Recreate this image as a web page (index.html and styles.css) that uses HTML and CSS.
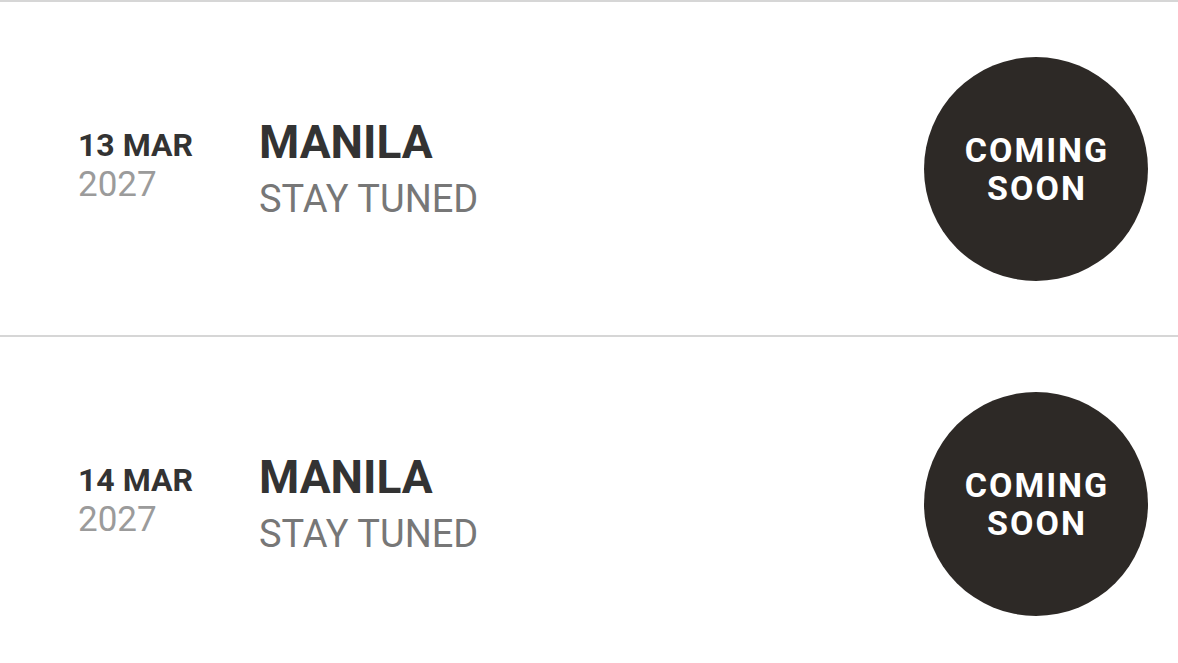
FILE: index.html
```html
<!DOCTYPE html>
<html lang="en">
<head>
<meta charset="utf-8">
<title>Tour dates</title>
<link rel="stylesheet" href="styles.css">
</head>
<body>
<ul class="dates">
  <li class="event">
    <div class="date">
      <span class="day">13 MAR</span>
      <span class="year">2027</span>
    </div>
    <div class="info">
      <span class="city">MANILA</span>
      <span class="venue">STAY TUNED</span>
    </div>
    <div class="badge"><span>COMING<br>SOON</span></div>
  </li>
  <li class="event">
    <div class="date">
      <span class="day">14 MAR</span>
      <span class="year">2027</span>
    </div>
    <div class="info">
      <span class="city">MANILA</span>
      <span class="venue">STAY TUNED</span>
    </div>
    <div class="badge"><span>COMING<br>SOON</span></div>
  </li>
</ul>
</body>
</html>
```
FILE: styles.css
```css
* { box-sizing: border-box; }
html, body { margin: 0; padding: 0; background: #fff; }
body { font-family: Roboto, "Noto Sans", sans-serif; }
.dates { list-style: none; margin: 0; padding: 0; }
.event {
  display: flex;
  align-items: center;
  height: 335px;
  padding: 0 30px 0 78px;
  border-top: 2px solid #d6d6d6;
}
.date {
  width: 181px;
  display: flex;
  flex-direction: column;
  margin-top: -8px;
}
.day {
  font-size: 32px;
  font-weight: 700;
  color: #333;
  line-height: 40px;
}
.year {
  font-size: 35px;
  color: #9b9b9b;
  line-height: 40px;
}
.info {
  flex: 1;
  display: flex;
  flex-direction: column;
}
.city {
  font-size: 46px;
  font-weight: 700;
  color: #333;
  line-height: 52px;
}
.venue {
  font-size: 38px;
  color: #777;
  line-height: 46px;
  margin-top: 8px;
}
.badge {
  width: 224px;
  height: 224px;
  border-radius: 50%;
  background: #2d2926;
  display: flex;
  align-items: center;
  justify-content: center;
  text-align: center;
  color: #fff;
  font-size: 34px;
  font-weight: 700;
  line-height: 38px;
  letter-spacing: 2px;
}
.badge span { margin-right: -2px; }
```
